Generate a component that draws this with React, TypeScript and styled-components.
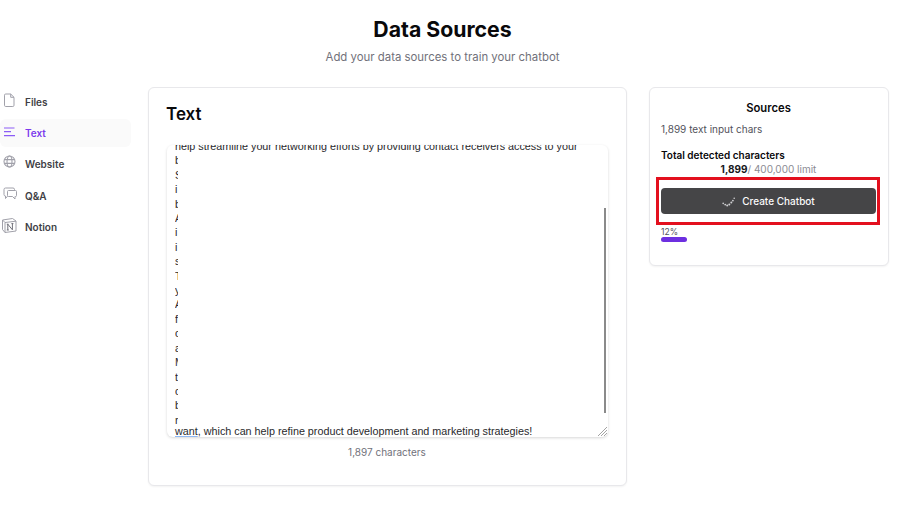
import { createGlobalStyle, styled } from "styled-components";

const GlobalStyle = createGlobalStyle`
  html, body {
    margin: 0;
    padding: 0;
    background: #fff;
    overflow: hidden;
  }
  body {
    font-family: Inter, "Liberation Sans", sans-serif;
    color: #09090b;
  }
  * { box-sizing: border-box; }
`;

const Page = styled.div`
  width: 900px;
  height: 514px;
`;

const Header = styled.header`
  width: 885px;
  height: 87px;
  padding-top: 16px;
  text-align: center;
`;

const Title = styled.h1`
  margin: 0;
  font-size: 21.25px;
  line-height: 26px;
  font-weight: 700;
  color: #09090b;
`;

const Subtitle = styled.p`
  margin: 5px 0 0;
  font-size: 11.4px;
  line-height: 20px;
  color: #71717a;
`;

const Columns = styled.div`
  display: flex;
  align-items: flex-start;
`;

const Sidebar = styled.nav`
  flex: none;
  width: 131px;
  margin-right: 17px;
  padding-top: 0.5px;
  display: flex;
  flex-direction: column;
  gap: 3px;
`;

const NavItem = styled.div<{ $active?: boolean }>`
  height: 28.4px;
  padding-left: 3px;
  display: flex;
  align-items: center;
  gap: 8px;
  border-radius: 6px;
  font-size: 10px;
  font-weight: 600;
  color: ${(p) => (p.$active ? "#7c3aed" : "#3f3f46")};
  background: ${(p) => (p.$active ? "#fafafa" : "transparent")};
  svg {
    width: 14px;
    height: 14px;
    flex: none;
    position: relative;
    top: -2px;
    overflow: visible;
    color: ${(p) => (p.$active ? "#8b5cf6" : "#a1a1aa")};
  }
`;

const Card = styled.section`
  flex: none;
  border: 1px solid #e8e8eb;
  border-radius: 6px;
  background: #fff;
  box-shadow: 0 1px 2px rgba(0, 0, 0, 0.05);
`;

const MainCard = styled(Card)`
  width: 479px;
  height: 399px;
  margin-right: 22px;
  padding: 16px 18px 0 17px;
`;

const CardTitle = styled.h2`
  margin: 0;
  font-size: 17px;
  line-height: 21px;
  font-weight: 600;
`;

const TextBox = styled.div`
  position: relative;
  width: 441px;
  height: 292px;
  margin: 20px 0 0 1px;
  padding: 0 8px;
  border-radius: 6px;
  overflow: hidden;
  box-shadow: 0 1px 3px rgba(0, 0, 0, 0.16);
  font-family: "Liberation Sans", Arial, sans-serif;
  font-size: 10.77px;
  line-height: 14.4px;
  color: #27272a;
`;

const TextLine = styled.div`
  white-space: nowrap;
  opacity: 0.99;
`;

const FirstLine = styled(TextLine)`
  margin-top: -6px;
`;

const LastLine = styled(TextLine)`
  position: absolute;
  left: 8px;
  bottom: -1px;
  z-index: 2;
`;

const Misspelled = styled.span`
  text-decoration: underline;
  text-decoration-color: #8fb8f2;
  text-decoration-thickness: 1px;
  text-underline-offset: 1px;
`;

/* white sheet that hides the body of the pasted text */
const TextMask = styled.div`
  position: absolute;
  left: 11px;
  right: 4px;
  top: 9px;
  bottom: 11px;
  background: #fff;
`;

const ScrollThumb = styled.div`
  position: absolute;
  right: 2px;
  top: 63px;
  bottom: 24px;
  width: 2px;
  background: #8a8a8a;
`;

const ResizeGrip = styled.svg`
  position: absolute;
  right: 1px;
  bottom: 1px;
  width: 10px;
  height: 10px;
`;

const CharCount = styled.div`
  margin-top: 8px;
  text-align: center;
  font-size: 10px;
  line-height: 14px;
  color: #71717a;
`;

const SourcesCard = styled(Card)`
  width: 240px;
  height: 179px;
  padding: 13px 12px 0 11px;
`;

const SourcesTitle = styled.h3`
  margin: 0;
  text-align: center;
  font-size: 11.25px;
  line-height: 15px;
  font-weight: 600;
`;

const InputChars = styled.p`
  margin: 6px 0 0;
  font-size: 10px;
  line-height: 14px;
  color: #52525b;
`;

const TotalLabel = styled.p`
  margin: 12px 0 0;
  font-size: 10px;
  line-height: 14px;
  font-weight: 600;
`;

const TotalValue = styled.p`
  margin: 0;
  text-align: center;
  font-size: 10px;
  line-height: 14px;
  color: #8b8b93;
  strong {
    font-weight: 700;
    color: #18181b;
  }
`;

const ButtonWrap = styled.div`
  position: relative;
  margin-top: 12px;
`;

const CreateButton = styled.button`
  width: 100%;
  height: 26px;
  border: 0;
  border-radius: 4px;
  display: flex;
  align-items: center;
  justify-content: center;
  gap: 6px;
  background: #454547;
  color: #fafafa;
  font-family: inherit;
  font-size: 10px;
  font-weight: 500;
  padding: 0;
`;

const Highlight = styled.div`
  position: absolute;
  left: -5px;
  right: -4px;
  top: -11px;
  bottom: -11px;
  border: 3px solid #e3101e;
`;

const ProgressLabel = styled.div`
  margin-top: 13px;
  font-size: 8.5px;
  line-height: 10px;
  color: #52525b;
`;

const ProgressBar = styled.div`
  height: 5px;
  border-radius: 3px;
  background: #6d2fe0;
`;

const navItems = [
  {
    label: "Files",
    icon: (
      <svg viewBox="0 0 14 14" fill="none" stroke="currentColor" strokeWidth="1">
        <path d="M1.5 2.2A1.2 1.2 0 0 1 2.7 1h5l3.3 3.3v8a1.2 1.2 0 0 1-1.2 1.2H2.7a1.2 1.2 0 0 1-1.2-1.2z" />
        <path d="M7.7 1v3.3H11" />
      </svg>
    ),
  },
  {
    label: "Text",
    active: true,
    icon: (
      <svg viewBox="0 0 14 14" fill="none" stroke="currentColor" strokeWidth="1.2">
        <path d="M1 4h10.5M1 7.7h7M1 11.7h11" />
      </svg>
    ),
  },
  {
    label: "Website",
    icon: (
      <svg viewBox="0 0 14 14" fill="none" stroke="currentColor" strokeWidth="1.1">
        <circle cx="6.5" cy="6.5" r="5.5" />
        <ellipse cx="6.5" cy="6.5" rx="2.5" ry="5.5" />
        <path d="M1.4 4.6h10.2M1.4 8.4h10.2" />
      </svg>
    ),
  },
  {
    label: "Q&A",
    icon: (
      <svg viewBox="0 0 14 14" fill="none" stroke="currentColor" strokeWidth="1">
        <path d="M11.5 3.5V2.5A1.5 1.5 0 0 0 10 1H2.5A1.5 1.5 0 0 0 1 2.5v5A1.5 1.5 0 0 0 2.5 9v2.5l2-2.3" />
        <path d="M5.5 3.5h7a1 1 0 0 1 1 1v4a1 1 0 0 1-1 1H12V12L9.5 9.5h-4a1 1 0 0 1-1-1v-4a1 1 0 0 1 1-1z" />
      </svg>
    ),
  },
  {
    label: "Notion",
    icon: (
      <svg viewBox="0 0 14 14" fill="none" stroke="currentColor" strokeWidth="1">
        <path d="M-.5 2 9.5.5 13 3v10L2 14.5-.5 11.5z" />
        <path d="M-.5 2 2 4.5l11-1.3M2 4.5v10" />
        <path stroke="#71717a" d="M4.8 12V6.2l4.6 5.6V5.6M3.8 6.2h1.6M8.4 5.6h2M3.8 12h2" />
      </svg>
    ),
  },
];

const hiddenLines = ["b", "S", "i", "b", "A", "i", "i", "s", "T", "y", "A", "f", "c", "a", "M", "t", "c", "b", "r"];

export default function App() {
  const progress = 12;

  return (
    <Page>
      <GlobalStyle />
      <Header>
        <Title>Data Sources</Title>
        <Subtitle>Add your data sources to train your chatbot</Subtitle>
      </Header>
      <Columns>
        <Sidebar>
          {navItems.map((item) => (
            <NavItem key={item.label} $active={item.active}>
              {item.icon}
              {item.label}
            </NavItem>
          ))}
        </Sidebar>
        <MainCard>
          <CardTitle>Text</CardTitle>
          <TextBox>
            <FirstLine>
              help streamline your networking efforts by providing contact receivers access to your
            </FirstLine>
            {hiddenLines.map((letter, i) => (
              <TextLine key={i}>{letter}</TextLine>
            ))}
            <TextMask />
            <LastLine>
              <Misspelled>want</Misspelled>, which can help refine product development and marketing strategies!
            </LastLine>
            <ScrollThumb />
            <ResizeGrip viewBox="0 0 10 10" stroke="#8a8a8a" strokeWidth="0.8">
              <path d="M1 10 10 1M4 10l6-6M7 10l3-3" />
            </ResizeGrip>
          </TextBox>
          <CharCount>1,897 characters</CharCount>
        </MainCard>
        <SourcesCard>
          <SourcesTitle>Sources</SourcesTitle>
          <InputChars>1,899 text input chars</InputChars>
          <TotalLabel>Total detected characters</TotalLabel>
          <TotalValue>
            <strong>1,899</strong>/ 400,000 limit
          </TotalValue>
          <ButtonWrap>
            <CreateButton>
              <svg width="14" height="11" viewBox="0 0 14 11" fill="#cfcfd2">
                <circle cx="1.2" cy="7.4" r="0.8" />
                <circle cx="3.2" cy="8.6" r="0.9" />
                <circle cx="5.2" cy="9.4" r="1" />
                <circle cx="7.3" cy="8.4" r="1" />
                <circle cx="9.3" cy="6.6" r="1" />
                <circle cx="10.9" cy="4.6" r="0.9" />
                <circle cx="12.2" cy="2.2" r="0.8" />
              </svg>
              Create Chatbot
            </CreateButton>
            <Highlight />
          </ButtonWrap>
          <ProgressLabel>{progress}%</ProgressLabel>
          <ProgressBar style={{ width: `${progress}%` }} />
        </SourcesCard>
      </Columns>
    </Page>
  );
}
